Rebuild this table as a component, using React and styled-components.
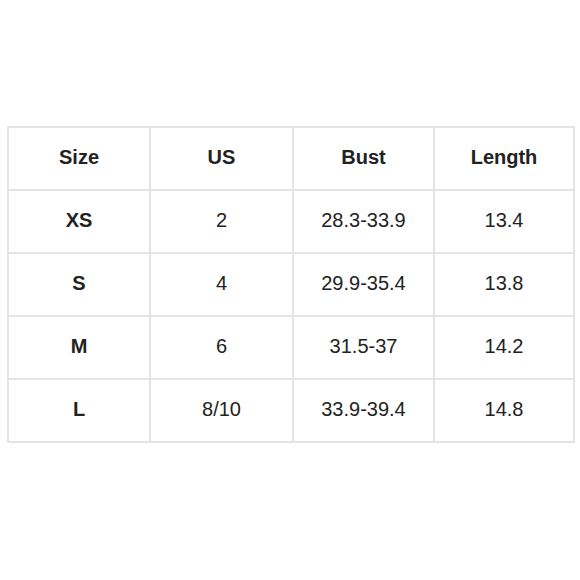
import styled, { createGlobalStyle } from 'styled-components'

const GlobalStyle = createGlobalStyle`
  html, body {
    margin: 0;
    padding: 0;
    background: #fff;
  }
`

const rows = [
  ['XS', '2', '28.3-33.9', '13.4'],
  ['S', '4', '29.9-35.4', '13.8'],
  ['M', '6', '31.5-37', '14.2'],
  ['L', '8/10', '33.9-39.4', '14.8'],
]

function App() {
  return (
    <Page>
      <GlobalStyle />
      <Table>
        {['Size', 'US', 'Bust', 'Length'].map((h) => (
          <Cell key={h} $bold>
            {h}
          </Cell>
        ))}
        {rows.map((row) =>
          row.map((value, i) => (
            <Cell key={row[0] + i} $bold={i === 0}>
              {value}
            </Cell>
          ))
        )}
      </Table>
    </Page>
  )
}

const Page = styled.div`
  width: 580px;
  height: 580px;
  padding: 126px 0 0 7px;
  box-sizing: border-box;
  background: #fff;
`

const Table = styled.div`
  display: grid;
  grid-template-columns: 140px 141px 139px 138px;
  grid-auto-rows: 61px;
  gap: 2px;
  padding: 2px;
  width: max-content;
  background: #e4e4e4;
`

const Cell = styled.div`
  display: flex;
  align-items: center;
  justify-content: center;
  padding-bottom: 2px;
  background: #fff;

  font-family: 'Liberation Sans', Arial, sans-serif;
  font-size: 20px;
  font-weight: ${({ $bold }) => ($bold ? 700 : 400)};
  color: #222;
`

export default App
